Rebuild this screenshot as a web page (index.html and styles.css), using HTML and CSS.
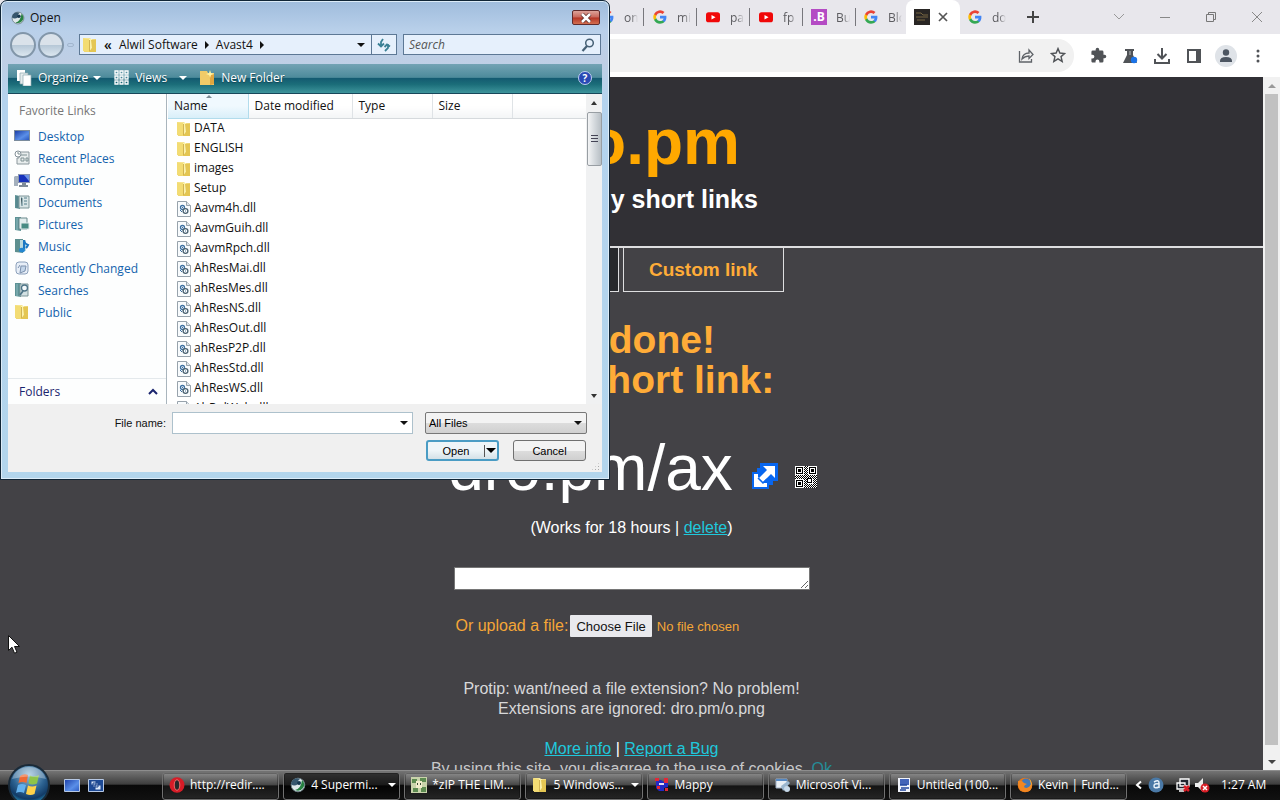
FILE: index.html
```html
<!DOCTYPE html>
<html lang="en">
<head>
<meta charset="utf-8">
<title>dro.pm</title>
<link rel="stylesheet" href="styles.css">
</head>
<body>
<svg class="sprite" aria-hidden="true">
  <defs>
    <linearGradient id="blueScreen" x1="0" y1="0" x2="1" y2="1"><stop offset="0" stop-color="#1c3fa8"/><stop offset=".6" stop-color="#5a8fe8"/><stop offset="1" stop-color="#2a58c0"/></linearGradient>
    <linearGradient id="folderYellow" x1="0" y1="0" x2="1" y2="1"><stop offset="0" stop-color="#fdf3b0"/><stop offset="1" stop-color="#dcb63c"/></linearGradient>
    <radialGradient id="orbFill" cx=".5" cy=".25" r=".8"><stop offset="0" stop-color="#9cc3da"/><stop offset=".5" stop-color="#2c6291"/><stop offset=".75" stop-color="#123b66"/><stop offset="1" stop-color="#36c3ea"/></radialGradient>
    <pattern id="dots" width="2" height="2" patternUnits="userSpaceOnUse"><rect width="2" height="2" fill="#fff"/><path d="M0 0h1v1H0zM1 1h1v1H1z" fill="#000"/></pattern>
  </defs>
  <symbol id="google" viewBox="0 0 24 24"><path fill="#4285f4" d="M23 12.3c0-.8-.1-1.600-.2-2.300H12v4.400h6.200c-.3 1.400-1.100 2.600-2.300 3.400v2.900h3.700c2.200-2 3.400-5 3.400-8.400z"/><path fill="#34a853" d="M12 23.500c3.100 0 5.700-1 7.600-2.800l-3.700-2.900c-1 .7-2.300 1.100-3.900 1.100-3 0-5.500-2-6.400-4.700H1.800v3C3.700 20.900 7.500 23.500 12 23.500z"/><path fill="#fbbc05" d="M5.600 14.200a7 7 0 0 1 0-4.400v-3H1.800a11.500 11.500 0 0 0 0 10.400z"/><path fill="#ea4335" d="M12 5.100c1.700 0 3.200.6 4.400 1.700l3.300-3.300A11.500 11.500 0 0 0 1.800 6.800l3.800 3C6.500 7.100 9 5.100 12 5.100z"/></symbol>
  <symbol id="youtube" viewBox="0 0 16 16"><rect y="2.500" width="16" height="11.500" rx="3" fill="#f00808"/><path d="M6.300 5.600v5.200l4.600-2.600z" fill="#fff"/></symbol>
  <symbol id="folder" viewBox="0 0 14 16"><path d="M1 1h6l1 1h5v13H1z" fill="url(#folderYellow)"/><path d="M0 1l6 1v13l-6-1z" fill="#f3dc74"/><path d="M6 2h3v9l-2 3H6z" fill="#fbf2ae"/><path d="M8 3h5v12H6l3-4z" fill="#e4c653"/><path d="M6.500 3v11" stroke="#c7a33c" stroke-width=".8"/></symbol>
  <symbol id="dll" viewBox="0 0 14 16"><path d="M.5.5h9l4 4v11H.5z" fill="#f8fbfd" stroke="#98a3ac"/><path d="M9.500.5v4h4" fill="#dde5ea" stroke="#98a3ac"/><g fill="#fff"><circle cx="5.500" cy="6.500" r="2" stroke="#3c6fa0" stroke-width="1.300"/><circle cx="8.500" cy="10" r="2.400" stroke="#48606f" stroke-width="1.300"/></g><path d="M5 6.500h1M8 10h1M3 9l2 2" stroke="#3c6fa0"/></symbol>
  <symbol id="avast" viewBox="0 0 16 16"><circle cx="8" cy="8" r="6.800" fill="#dfe8ea" stroke="#71848b"/><path d="M2 4Q5 0 10 2q-3 2-2 5-4 3-7 0z" fill="#36566d"/><path d="M12 3q4 4 1 8-3 4-8 2 6-1 7-10z" fill="#278142"/><circle cx="9" cy="6" r="2" fill="#15364e"/></symbol>
  <symbol id="desktop" viewBox="0 0 16 14"><path d="M0 1h16v11H0z" fill="#7a8b9c"/><path d="M1 2h14v9H1z" fill="url(#blueScreen)"/></symbol>
  <symbol id="recent" viewBox="0 0 16 16"><path d="M5 2h10v12H3V8h2z" fill="#e8eded" stroke="#8b979c"/><circle cx="4" cy="4" r="3" fill="#fff" stroke="#839097"/><path d="M4 2v2h2M7 5h6M7 8h3v3H7zM12 8h2v3h-2z" fill="none" stroke="#7e9092"/></symbol>
  <symbol id="computer" viewBox="0 0 16 16"><path d="M1 4h3v10H0V5z" fill="#a4b0bd"/><path d="M4 2h12v9H4z" fill="#8995b2"/><path d="M5 3h10v7H5z" fill="#1732bb"/><path d="M10 3h5v6z" fill="#6e94e4"/><path d="M8 11h4v2h2v2H5v-2h3z" fill="#7e8b98"/></symbol>
  <symbol id="library" viewBox="0 0 16 16"><path d="M1 1l5 1v13l-5-1z" fill="#5d9295"/><path d="M5 2h10v12H5z" fill="#d9e5e6" stroke="#7c9598"/><path d="M3 2v12M7 4h1v8M10 4h3M10 7h3M10 10h3" stroke="#547f8a"/></symbol>
  <symbol id="search-folder" viewBox="0 0 16 16"><path d="M1 1h6v14l-6-1z" fill="#5d9295"/><path d="M6 2h8v12H6z" fill="#d3e1e3" stroke="#7c9598"/><circle cx="10.500" cy="6" r="3" fill="#f3f9fb" stroke="#4f7588" stroke-width="1.300"/><path d="M9 9l-3 4" stroke="#4f7588" stroke-width="1.800"/><path d="M3 2v12" stroke="#8fbac0"/></symbol>
  <symbol id="pictures" viewBox="0 0 16 16"><path d="M1 1h6v14l-6-1z" fill="#5d9295"/><path d="M5 2h8v11H5z" fill="#e3eeee" stroke="#68888c"/><path d="M7 7h8v6H7z" fill="#488b83" stroke="#e0eaea"/><path d="M3 2v12" stroke="#8fbac0"/></symbol>
  <symbol id="music" viewBox="0 0 16 16"><path d="M1 1h8v14l-8-1z" fill="#5d8f8f"/><path d="M6 2h6v11H6z" fill="#b9d9de"/><path d="M10 2v9M10 3q1 3 4 4-1 2-2 3" stroke="#1b78c4" stroke-width="2" fill="none"/><ellipse cx="8" cy="12" rx="3" ry="2.300" fill="#2487d0"/></symbol>
  <symbol id="changed" viewBox="0 0 16 16"><rect x="2" y="2" width="12" height="12" rx="3" fill="#e7eef7" stroke="#8ca0bb"/><path d="M6 13l1-7h5l-1 5-5 2zM4 8l2-3" fill="#c3d5e9" stroke="#7c91ad"/></symbol>
  <symbol id="opera" viewBox="0 0 16 16"><ellipse cx="8" cy="8" rx="7.500" ry="7.700" fill="#d71c27"/><ellipse cx="8" cy="8" rx="2.800" ry="5.300" fill="#29282a" stroke="#ef6868"/></symbol>
  <symbol id="firefox" viewBox="0 0 16 16"><circle cx="8" cy="8" r="7.300" fill="#e87717"/><circle cx="9" cy="6.500" r="4.900" fill="#4279b8"/><path d="M1 4q4-1 6 2l3 1q-3 1-3 3 4 3 8-4 1 9-7 9-8-1-7-11z" fill="#f18722"/><path d="M12 1q5 6 0 11 4-4 0-11z" fill="#ffd151"/></symbol>
</svg>

<div class="screen">
  <section class="browser" aria-label="Browser">
    <div class="tabstrip">
      <div class="tab"><svg class="favicon"><use href="#google"/></svg><span class="tab-text">on</span></div>
      <div class="tab"><svg class="favicon"><use href="#google"/></svg><span class="tab-text">mi</span></div>
      <div class="tab"><svg class="favicon"><use href="#youtube"/></svg><span class="tab-text">pa</span></div>
      <div class="tab"><svg class="favicon"><use href="#youtube"/></svg><span class="tab-text">fp</span></div>
      <div class="tab"><span class="favicon b-icon">.B</span><span class="tab-text">Bu</span></div>
      <div class="tab last"><svg class="favicon"><use href="#google"/></svg><span class="tab-text">Blo</span></div>
      <div class="tab active"><svg class="favicon" viewBox="0 0 16 16"><path d="M0 0h16v16H0z" fill="#292624"/><path d="M2 4h5l2 2h5M2 8h12M3 11h8" stroke="#766440" fill="none"/></svg><button class="plain" aria-label="Close tab"><svg width="10" height="10" viewBox="0 0 10 10"><path d="M1 1l8 8M9 1L1 9" stroke="#555" stroke-width="1.700"/></svg></button></div>
      <div class="tab last"><svg class="favicon"><use href="#google"/></svg><span class="tab-text">do</span></div>
      <button class="plain new-tab" aria-label="New tab"><svg width="12" height="12" viewBox="0 0 12 12"><path d="M6 0v12M0 6h12" stroke="#444" stroke-width="2"/></svg></button>
      <div class="window-buttons">
        <button class="plain" aria-label="Search tabs"><svg width="12" height="12" viewBox="0 0 12 12"><path d="M1 3l5 5 5-5" fill="none" stroke="#999"/></svg></button>
        <button class="plain" aria-label="Minimize"><svg width="12" height="12" viewBox="0 0 12 12"><path d="M1 6.500h10" stroke="#888"/></svg></button>
        <button class="plain" aria-label="Restore"><svg width="12" height="12" viewBox="0 0 12 12"><path d="M1.500 3.500h7v7h-7zM3.500 3V1.500h7v7H9" fill="none" stroke="#777"/></svg></button>
        <button class="plain" aria-label="Close"><svg width="12" height="12" viewBox="0 0 12 12"><path d="M1 1l10 10M11 1L1 11" stroke="#888"/></svg></button>
      </div>
    </div>
    <div class="toolbar">
      <div class="omnibox">
        <button class="plain" aria-label="Share"><svg width="18" height="18" viewBox="0 0 18 18" fill="none" stroke="#5f6368" stroke-width="1.300"><path d="M2.500 5v11h12v-3M5 13q1-6 7-6V4l4 4.500-4 4V10q-4 0-7 3z"/></svg></button>
        <button class="plain" aria-label="Bookmark"><svg width="16" height="16" viewBox="0 0 18 18"><path d="M9 1.800l2.100 5 5.400.5-4.100 3.500 1.300 5.400L9 13.300l-4.700 2.900 1.300-5.400L1.500 7.300l5.400-.5z" fill="none" stroke="#505357" stroke-width="1.600"/></svg></button>
      </div>
      <div class="actions">
        <button class="plain" aria-label="Extensions"><svg width="17" height="17" viewBox="0 0 24 24"><path fill="#505357" d="M20.500 11H19V7a2 2 0 0 0-2-2h-4V3.500a2.500 2.500 0 0 0-5 0V5H4a2 2 0 0 0-2 2v3.800h1.500a2.700 2.700 0 0 1 0 5.400H2V20c0 1.100.9 2 2 2h3.800v-1.500a2.700 2.700 0 0 1 5.400 0V22H17a2 2 0 0 0 2-2v-4h1.500a2.500 2.500 0 0 0 0-5z"/></svg></button>
        <button class="plain" aria-label="Labs"><svg width="16" height="16" viewBox="0 0 16 16"><path d="M3 1h9v2h-1v4l4 8H1l4-8V3H3z" fill="#505357"/><path d="M7 3h2v4H7z" fill="#85888b"/><circle cx="12" cy="12" r="3.200" fill="#1a73e8"/></svg></button>
        <button class="plain" aria-label="Downloads"><svg width="18" height="18" viewBox="0 0 18 18" fill="none" stroke="#505357" stroke-width="2"><path d="M9 1v10M4.500 7L9 11.500 13.500 7M2 12v4h14v-4"/></svg></button>
        <button class="plain" aria-label="Side panel"><svg width="16" height="16" viewBox="0 0 16 16"><path d="M2 2h12v12H2z" fill="none" stroke="#505357" stroke-width="2"/><path d="M10 2h5v12h-5z" fill="#505357"/></svg></button>
        <button class="plain" aria-label="Profile"><svg width="22" height="22" viewBox="0 0 22 22"><circle cx="11" cy="11" r="11" fill="#dfe3e8"/><circle cx="11" cy="7.500" r="3.200" fill="#4d5662"/><path d="M5 16q0-4 6-4t6 4v1H5z" fill="#4d5662"/></svg></button>
        <button class="plain" aria-label="Menu"><svg width="4" height="14" viewBox="0 0 4 14" fill="#505357"><circle cx="2" cy="2" r="1.500"/><circle cx="2" cy="7" r="1.500"/><circle cx="2" cy="12" r="1.500"/></svg></button>
      </div>
    </div>
    <div class="viewport">
      <main class="page">
        <header class="site-header">
          <h1>dro.pm</h1>
          <p>Extremely short links</p>
        </header>
        <nav class="modes"><a class="mode current" href="#short">Short link</a><a class="mode" href="#custom">Custom link</a></nav>
        <h2>All done!<br>Your short link:</h2>
        <div class="short-link">
          <span>dro.pm/ax</span>
          <svg class="open-icon" viewBox="0 0 26 26"><path d="M8 0h18v18h-5v4h-4v4H0V9h5V5h3z" fill="#0866ef"/><path d="M11 3h12v12l-4-4-8 8-4-4 8-8z" fill="#fff"/><path d="M2 11h4v3l6 6h3v4H2z" fill="#fff"/><path d="M6 15l5 5 4-4" fill="none" stroke="#0866ef" stroke-width="1.500"/></svg>
          <svg class="qr" viewBox="0 0 22 22" shape-rendering="crispEdges"><path d="M0 0h22v22H0z" fill="url(#dots)"/><g fill="#fff"><path d="M0 0h9v9H0zM13 0h9v9h-9zM0 13h9v9H0zM12 12h6v6h-6z"/></g><g fill="none" stroke="#000"><path d="M1.500 1.500h6v6h-6zM14.500 1.500h6v6h-6zM1.500 14.500h6v6h-6zM12.500 12.500h4v4h-4z"/></g><path d="M3 3h3v3H3zM16 3h3v3h-3zM3 16h3v3H3z"/></svg>
        </div>
        <p class="validity">(Works for 18 hours | <a href="#delete">delete</a>)</p>
        <form class="paste">
          <textarea aria-label="Link or text"></textarea>
          <div class="upload"><label for="upload">Or upload a file:</label><input type="file" id="upload"></div>
        </form>
        <p class="protip">Protip: want/need a file extension? No problem!<br>Extensions are ignored: dro.pm/o.png</p>
        <p class="legal"><a href="#info">More info</a> | <a href="#bug">Report a Bug</a><br><span>By using this site, you disagree to the use of cookies. <a class="ok" href="#ok">Ok</a></span></p>
      </main>
      <div class="scrollbar"><span class="arrow up"></span><span class="thumb"></span><span class="arrow down"></span></div>
    </div>
  </section>

  <section class="dialog" role="dialog" aria-labelledby="dialog-title">
    <div class="titlebar"><svg width="14" height="14"><use href="#avast"/></svg><span id="dialog-title">Open</span><button class="close" aria-label="Close"><svg width="12" height="10" viewBox="0 0 12 10"><path d="M2 1l8 8M10 1L2 9" stroke="#5a2a25" stroke-width="4"/><path d="M2 1l8 8M10 1L2 9" stroke="#fff" stroke-width="2.500"/></svg></button></div>
    <div class="navrow">
      <button class="round" aria-label="Back"></button><button class="round" aria-label="Forward"></button><span class="history"></span>
      <div class="address"><svg width="14" height="16"><use href="#folder"/></svg><span class="chevrons">«</span><span>Alwil Software</span><i class="right"></i><span>Avast4</span><i class="right"></i><i class="down"></i></div>
      <button class="refresh" aria-label="Refresh"><svg width="14" height="14" viewBox="0 0 14 14" fill="none" stroke="#3a8095" stroke-width="1.800"><path d="M6 1L4 4v4M1 5.500l3 3 3-3M8 13l3-3V6M7.500 9L10 6.500l3 2"/></svg></button>
      <div class="search"><input type="text" placeholder="Search" aria-label="Search"><svg width="14" height="14" viewBox="0 0 14 14" fill="none" stroke="#466075"><circle cx="8.500" cy="5" r="3.800" stroke-width="1.500"/><path d="M6 8l-4.500 5" stroke-width="2.200"/></svg></div>
    </div>
    <div class="commands">
      <button class="command organize"><svg width="16" height="16" viewBox="0 0 16 16"><path d="M1 0h8v11H1z" fill="#fff"/><path d="M4 3h8v11H4z" fill="#e5eced" stroke="#8ca9af" stroke-width=".7"/><path d="M7 5h8v11H7z" fill="#fff" stroke="#8ca9af" stroke-width=".7"/></svg>Organize<i class="down"></i></button>
      <button class="command views"><svg width="15" height="15" viewBox="0 0 15 15" fill="none" stroke="#fff" stroke-width="1.300"><path d="M1 1h3v3H1zM6 1h3v3H6zM11 1h3v3h-3zM1 6h3v3H1zM6 6h3v3H6zM11 6h3v3h-3zM1 11h3v3H1zM6 11h3v3H6zM11 11h3v3h-3z"/></svg>Views<i class="down"></i></button>
      <button class="command"><svg width="16" height="16" viewBox="0 0 16 16"><path d="M1 1h7l1 2h6v12H1z" fill="#f1cb68"/><path d="M10 4h5v10l-4 1V9z" fill="#e0a63f"/><path d="M11 0l1 3 3 1-3 1-1 3-1-3-3-1 3-1z" fill="#fff4a4"/></svg>New Folder</button>
      <button class="help" aria-label="Help">?</button>
    </div>
    <div class="files">
      <nav class="places">
        <h3>Favorite Links</h3>
        <a href="#desktop"><svg><use href="#desktop"/></svg>Desktop</a>
        <a href="#recent"><svg><use href="#recent"/></svg>Recent Places</a>
        <a href="#computer"><svg><use href="#computer"/></svg>Computer</a>
        <a href="#documents"><svg><use href="#library"/></svg>Documents</a>
        <a href="#pictures"><svg><use href="#pictures"/></svg>Pictures</a>
        <a href="#music"><svg><use href="#music"/></svg>Music</a>
        <a href="#changed"><svg><use href="#changed"/></svg>Recently Changed</a>
        <a href="#searches"><svg><use href="#search-folder"/></svg>Searches</a>
        <a href="#public"><svg><use href="#folder"/></svg>Public</a>
        <button class="folders">Folders<svg width="10" height="7" viewBox="0 0 10 7"><path d="M1 6l4-4 4 4" fill="none" stroke="#1a246e" stroke-width="2"/></svg></button>
      </nav>
      <div class="list">
        <table>
          <colgroup><col class="c-name"><col class="c-date"><col class="c-type"><col class="c-size"><col></colgroup>
          <thead><tr><th class="sorted">Name</th><th>Date modified</th><th>Type</th><th>Size</th><th></th></tr></thead>
          <tbody>
            <tr><td colspan="5"><svg><use href="#folder"/></svg>DATA</td></tr>
            <tr><td colspan="5"><svg><use href="#folder"/></svg>ENGLISH</td></tr>
            <tr><td colspan="5"><svg><use href="#folder"/></svg>images</td></tr>
            <tr><td colspan="5"><svg><use href="#folder"/></svg>Setup</td></tr>
            <tr><td colspan="5"><svg><use href="#dll"/></svg>Aavm4h.dll</td></tr>
            <tr><td colspan="5"><svg><use href="#dll"/></svg>AavmGuih.dll</td></tr>
            <tr><td colspan="5"><svg><use href="#dll"/></svg>AavmRpch.dll</td></tr>
            <tr><td colspan="5"><svg><use href="#dll"/></svg>AhResMai.dll</td></tr>
            <tr><td colspan="5"><svg><use href="#dll"/></svg>ahResMes.dll</td></tr>
            <tr><td colspan="5"><svg><use href="#dll"/></svg>AhResNS.dll</td></tr>
            <tr><td colspan="5"><svg><use href="#dll"/></svg>AhResOut.dll</td></tr>
            <tr><td colspan="5"><svg><use href="#dll"/></svg>ahResP2P.dll</td></tr>
            <tr><td colspan="5"><svg><use href="#dll"/></svg>AhResStd.dll</td></tr>
            <tr><td colspan="5"><svg><use href="#dll"/></svg>AhResWS.dll</td></tr>
            <tr><td colspan="5"><svg><use href="#dll"/></svg>AhRulWeb.dll</td></tr>
          </tbody>
        </table>
      </div>
      <div class="list-scroll"><i class="up"></i><span class="grip"></span><i class="down"></i></div>
    </div>
    <div class="chooser">
      <label for="filename">File name:</label>
      <div class="combo"><input id="filename" type="text"><i class="down"></i></div>
      <div class="combo filter"><select aria-label="File type"><option>All Files</option></select><i class="down"></i></div>
      <div class="buttons"><button class="push default"><span>Open</span><i class="down"></i></button><button class="push">Cancel</button></div>
      <span class="resize"></span>
    </div>
  </section>

  <svg class="cursor" viewBox="0 0 12 19"><path d="M.5.5v15l3.500-3.300 2.500 6 2.500-1-2.500-5.700h5z" fill="#fff" stroke="#111"/></svg>

  <footer class="taskbar">
    <button class="start" aria-label="Start"><svg width="42" height="42" viewBox="0 0 42 42"><circle cx="21" cy="21" r="20" fill="url(#orbFill)" stroke="#1a2a38" stroke-width="2"/><path d="M12 12q4-3 8-1l-1.500 8q-4-2-8 0z" fill="#ee6a35"/><path d="M22 11.500q4 2 9-.5l-2 8.500q-4 2-8.500 0z" fill="#8ec449"/><path d="M10 21q4-2 8 0l-2 8q-4-2-8 0z" fill="#63b1ed"/><path d="M20 21.500q4 2 8.500 0l-2 8.500q-4 2-8.500 0z" fill="#ffd24a"/><path d="M4 15Q8 3 21 3t17 12q-17-5-34 0z" fill="#fff" opacity=".3"/></svg></button>
    <div class="quick">
      <button class="plain" aria-label="Show desktop"><svg width="16" height="13" viewBox="0 0 16 13"><path d="M.5.5h15v12H.5z" fill="url(#blueScreen)" stroke="#b6c8e4"/></svg></button>
      <button class="plain" aria-label="Switch windows"><svg width="16" height="13" viewBox="0 0 16 13"><path d="M.5.5h15v12H.5z" fill="#1d4a96" stroke="#b6c8e4"/><path d="M3 2h5v4H3zM5 4h5v4H5zM7 6h6v5H7z" fill="#dbe9fb" stroke="#1e478e"/></svg></button>
    </div>
    <div class="tasks">
      <button class="task"><svg><use href="#opera"/></svg><span>http://redir....</span></button>
      <button class="task pressed"><svg><use href="#avast"/></svg><span>4 Supermi...</span><i class="down"></i></button>
      <button class="task"><svg viewBox="0 0 16 16"><path d="M0 0h16v16H0z" fill="#c9d3ab"/><path d="M1 2h5v4H1zM9 1h6v4H9zM2 11h5v4H2zM10 10h5v5h-5z" fill="#5d8b51"/><path d="M5 4h6v7H5z" fill="#f0eccc"/><path d="M6 6h1v2H6zM9 6h1v2H9z" fill="#3b4a35"/></svg><span>*zIP THE LIM...</span></button>
      <button class="task"><svg><use href="#folder"/></svg><span>5 Windows...</span><i class="down"></i></button>
      <button class="task"><svg viewBox="0 0 16 16"><path d="M2 3h5l3 2 4-3v8l-4 1v3H5l-3-3z" fill="#2329c4"/><path d="M1 1h4v3H1zM10 1h4v5h-4zM3 9h3v3H3zM11 11h3v3h-3z" fill="#e22737"/><path d="M5 6h5v2H5z" fill="#e9dcf0"/></svg><span>Mappy</span></button>
      <button class="task"><svg viewBox="0 0 16 16"><path d="M1 2h11v9H1z" fill="#e8eef4" stroke="#a0b0c4"/><path d="M1 2h11v2H1z" fill="#5689c3"/><path d="M6 9l7-5 2 2-7 8z" fill="#9ab6cf"/><circle cx="12" cy="12" r="3" fill="#c7d9ea"/></svg><span>Microsoft Vi...</span></button>
      <button class="task"><svg viewBox="0 0 16 16"><path d="M2 1h12v14H2z" fill="#f1f4fb"/><path d="M4 2h9v6H4z" fill="#4364b8"/><path d="M4 8h7M5 11h8M4 13h6" stroke="#23479f" stroke-width="1.500"/></svg><span>Untitled (100...</span></button>
      <button class="task"><svg><use href="#firefox"/></svg><span>Kevin | Fund...</span></button>
    </div>
    <div class="tray">
      <svg width="8" height="10" viewBox="0 0 8 10"><path d="M6 1.500L2 5l4 3.500" fill="none" stroke="#fff" stroke-width="2"/></svg>
      <svg class="avast-tray" width="16" height="16" viewBox="0 0 16 16"><circle cx="8" cy="8" r="7.500" fill="#4a79a6"/><path d="M6 5q5-3 5 1v5M11 7q-5-1-5 2t5 1" fill="none" stroke="#e8f2fa" stroke-width="1.500"/></svg>
      <svg width="16" height="16" viewBox="0 0 16 16"><path d="M5 2h9v7H5zM2 6h8v6H2zM4 14h5" fill="#20262e" stroke="#fff" stroke-width="1.300"/><path d="M9 9l5 5M14 9l-5 5" stroke="#d91d25" stroke-width="2.500"/></svg>
      <svg width="16" height="16" viewBox="0 0 16 16"><path d="M1 6h3l5-5v14l-5-5H1z" fill="#eee"/><circle cx="11" cy="11" r="4.500" fill="#d81e26"/><path d="M9 9l4 4M13 9l-4 4" stroke="#fff" stroke-width="1.500"/></svg>
      <time>1:27 AM</time>
    </div>
  </footer>
</div>
</body>
</html>
```
FILE: styles.css
```css
* { box-sizing: border-box; }
body { margin: 0; font-family: "Open Sans", "Noto Sans", sans-serif; font-size: 12px; }
button, input, select { font: inherit; }
h1, h2, h3, p { margin: 0; }
button { padding: 0; cursor: default; }
.sprite { position: absolute; width: 0; height: 0; }
.plain { display: flex; align-items: center; justify-content: center; border: 0; background: none; }

.up, .down, .right { flex: none; width: 0; height: 0; border: 4px solid transparent; }
.down { border-top-color: currentColor; border-bottom: 0; }
.up { border-bottom-color: currentColor; border-top: 0; }
.right { border-left-color: currentColor; border-right: 0; }

.screen { position: relative; display: flex; flex-direction: column; height: 100vh; overflow: hidden; background: #434246; }

/* Browser window */
.browser { flex: 1; min-height: 0; display: flex; flex-direction: column; }
.tabstrip { flex: none; display: flex; align-items: center; height: 34px; padding-left: 591px; background: #e8e7ec; }
.tab { display: flex; align-items: center; gap: 9px; width: 53px; height: 18px; padding-left: 8px; border-right: 1px solid #77777c; color: #5c5c60; }
.tab.last { width: 50px; padding-left: 7px; border-color: transparent; }
.tab.active { align-self: flex-end; height: 34px; width: 54px; padding-left: 8px; gap: 8px; border: 0; border-radius: 8px 8px 0 0; background: #fff; }
.favicon { flex: none; width: 16px; height: 16px; }
svg.favicon { padding: 1px; }
.active svg.favicon { padding: 0; }
.b-icon { background: #b44bc4; color: #fff; font-weight: 700; line-height: 16px; text-align: center; }
.tab-text { width: 14px; overflow: hidden; white-space: nowrap; -webkit-mask-image: linear-gradient(90deg, #000 50%, transparent); mask-image: linear-gradient(90deg, #000 50%, transparent); }
.new-tab { width: 28px; height: 28px; margin-left: 9px; }
.window-buttons { display: flex; margin-left: auto; height: 28px; }
.window-buttons button { width: 46px; }
.toolbar { flex: none; display: flex; align-items: center; gap: 8px; height: 43px; padding-right: 6px; background: #fff; }
.omnibox { flex: 1; display: flex; justify-content: flex-end; height: 33px; border-radius: 16px; background: #f1f1f1; }
.omnibox button, .actions button { width: 32px; height: 32px; }
.actions { display: flex; }
.viewport { flex: 1; min-height: 0; display: flex; }

/* Web page */
.page { flex: 1; min-width: 0; overflow: hidden; background: #434246; color: #fff; font-family: "Liberation Sans", Arial, sans-serif; font-size: 16px; line-height: 20px; text-align: center; }
.page a { color: #1fc8dc; }
.site-header { padding: 29px 0 33px; border-bottom: 2px solid #dedee0; background: #313035; }
.site-header h1 { color: #ffa800; font-size: 64px; line-height: 72px; }
.site-header p { margin-top: 7px; font-size: 25px; line-height: 28px; font-weight: 700; }
.modes { display: flex; justify-content: center; gap: 4px; }
.page .mode { padding: 0 25px; border: 1px solid #dedee0; border-top: 0; color: #ffac38; font-size: 19px; line-height: 43px; font-weight: 700; text-decoration: none; }
.page .mode.current { background: #27282c; }
.page h2 { margin-top: 28px; color: #ffac38; font-size: 39px; line-height: 40px; }
.short-link { display: flex; justify-content: center; align-items: flex-end; margin-top: 32px; padding-left: 2px; font-size: 64px; line-height: 72px; }
.open-icon { width: 26px; height: 26px; margin: 0 17px 15px 19px; }
.qr { width: 22px; height: 22px; margin-bottom: 16px; }
.validity { margin-top: 14px; }
.paste { width: 356px; margin: 29px auto 0; text-align: left; }
.paste textarea { display: block; width: 100%; height: 23px; border: 1px solid #767676; background: #fff; }
.upload { display: flex; align-items: center; gap: 2px; margin-top: 25px; padding-left: 2px; color: #f5a637; }
.upload label { flex: none; white-space: nowrap; }
.upload input { flex: 1; min-width: 0; font-size: 13px; line-height: 20px; }
.upload input::file-selector-button { height: 22px; margin-right: 5px; padding: 0 6px; border: 0; border-radius: 1px; background: #e9e9ed; color: #111; font-size: 13px; }
.protip { margin-top: 42px; color: #d8d8da; }
.legal { margin-top: 20px; }
.legal span { color: #c8c8ca; }
.page .ok { color: #258c98; text-decoration: none; }
.scrollbar { flex: none; display: flex; flex-direction: column; align-items: center; width: 17px; background: #f1f1f1; }
.arrow { display: grid; place-items: center; width: 17px; height: 17px; border: 0; }
.arrow::after { content: ""; border: 4px solid transparent; }
.arrow.up::after { border-bottom-color: #999; border-top: 0; }
.arrow.down::after { border-top-color: #444; border-bottom: 0; }
.thumb { flex: 1; width: 13px; margin-bottom: 8px; background: #c1c1c1; }

/* File dialog */
.dialog { position: absolute; top: 0; left: 0; display: flex; flex-direction: column; width: 610px; height: 480px; padding: 0 7px 7px; border: 1px solid #102536; border-radius: 7px 7px 0 0; background: linear-gradient(#9fbcdc, #b9d0ea 30px, #bfcfe5 60px, #b4d3ee 100px, #b2d5ec); box-shadow: inset 0 0 0 1px #dcecf8; color: #111; }
.titlebar { flex: none; display: flex; align-items: center; gap: 5px; height: 33px; padding: 0 2px 0 3px; }
.close { display: grid; place-items: center; width: 28px; height: 15px; margin-left: auto; border: 1px solid #602b2c; border-radius: 2px; background: linear-gradient(#dca39a, #c9675b 48%, #b33425 52%, #d36f50); }
.navrow { flex: none; display: flex; align-items: center; height: 21px; padding: 0 1px 0 2px; }
.round { flex: none; width: 26px; height: 26px; margin-right: 2px; border: 2px solid #8296a9; border-radius: 50%; background: linear-gradient(#dae2ea 50%, #b7c8d7 52%, #dce7f0); }
.history { width: 7px; height: 4px; margin: 0 5px 0 1px; border: 1px solid #a2b6ce; border-radius: 2px; }
.address, .refresh, .search { height: 21px; border: 1px solid #5d7895; background: #e6f0fc; }
.address { display: flex; align-items: center; flex: 1; gap: 7px; padding: 0 6px 0 3px; }
.chevrons { width: 8px; font-size: 14px; line-height: 16px; font-weight: 600; }
.address .down { margin-left: auto; }
.refresh { display: grid; place-items: center; width: 26px; margin-left: -1px; }
.search { display: flex; align-items: center; width: 198px; margin-left: 6px; padding-right: 5px; }
.search input { flex: 1; min-width: 0; padding: 0 5px; border: 0; background: none; outline: 0; font-style: italic; }
.search input::placeholder { color: #555; }
.commands { flex: none; display: flex; align-items: center; height: 30px; margin-top: 9px; padding: 0 10px 2px 8px; border-bottom: 1px solid #17475a; background: linear-gradient(#73a3b4, #4d8b9b 46%, #145b71 50%, #1b6d79 70%, #3d949b); color: #fff; }
.command { display: flex; align-items: center; gap: 6px; border: 0; background: none; color: #fff; text-shadow: 0 1px 1px #134554; }
.organize { margin-right: 13px; }
.organize .down { margin-left: -1px; }
.views { margin-right: 12px; }
.views .down { margin-left: 6px; }
.help { width: 14px; height: 14px; margin-left: auto; border: 1px solid #bfcdf0; border-radius: 50%; background: #2949b5; color: #fff; font-size: 10px; line-height: 12px; font-weight: 700; }
.files { flex: 1; min-height: 0; display: flex; background: #fff; }
.places { display: flex; flex-direction: column; width: 159px; border-right: 1px solid #a9b5bd; background: #fdfefe; }
.places h3 { padding: 6px 0 3px 11px; color: #777; font-size: 12px; line-height: 22px; font-weight: 400; }
.places a { display: flex; align-items: center; gap: 8px; height: 22px; padding-left: 6px; color: #1463ad; text-decoration: none; }
.places a svg { width: 16px; height: 16px; }
.folders { display: flex; align-items: center; justify-content: space-between; height: 26px; margin-top: auto; padding: 0 8px 0 11px; border: 0; border-top: 1px solid #e4e9ec; background: none; color: #1a246e; }
.list { flex: 1; min-width: 0; overflow: hidden; padding-left: 1px; }
table { width: 100%; table-layout: fixed; border-collapse: collapse; }
.c-name, .c-type, .c-size { width: 80px; }
.c-date { width: 104px; }
th { height: 24px; padding: 0 6px; border-right: 1px solid #dfe3e6; border-bottom: 1px solid #d6dadd; background: linear-gradient(#fff 50%, #f3f5f6); font-weight: 400; text-align: left; }
th:last-child { border-right: 0; }
th.sorted { background: linear-gradient(#f0f9fe 50%, #d9eff9); border-color: #b2dcec; }
.sorted::before { content: ""; position: absolute; margin: -2px 0 0 32px; border: 3px solid transparent; border-top: 0; border-bottom-color: #7a8b94; }
td { height: 20px; padding: 0 9px; line-height: 18px; }
td svg { width: 14px; height: 16px; margin-right: 3px; vertical-align: middle; }
.list-scroll { display: flex; flex-direction: column; align-items: center; width: 16px; padding: 7px 0 6px; background: #f0f1f2; color: #333; }
.list-scroll .down { margin-top: auto; }
.list-scroll .up, .list-scroll .down { border-left-width: 3px; border-right-width: 3px; }
.grip { display: grid; place-items: center; width: 15px; height: 54px; margin-top: 7px; border: 1px solid #989ea3; border-radius: 2px; background: linear-gradient(90deg, #f3f4f5, #d4d9dd 50%, #b8bfc5); }
.grip::before { content: ""; width: 7px; height: 8px; background: repeating-linear-gradient(#445 0 1px, transparent 1px 3px); }
.chooser { flex: none; position: relative; display: grid; grid-template-columns: 158px 241px 162px; column-gap: 6px; row-gap: 6px; align-items: center; height: 68px; padding-top: 8px; align-content: start; background: #f0f0f0; font-family: "Liberation Sans", Arial, sans-serif; font-size: 11px; }
.chooser label { text-align: right; }
.combo { display: flex; align-items: center; height: 22px; padding-right: 4px; border: 1px solid #adc1cc; background: #fff; }
.combo input { flex: 1; min-width: 0; border: 0; background: none; outline: 0; }
.filter { margin-left: 6px; width: 162px; border-color: #777; border-radius: 2px; background: linear-gradient(#f3f3f3 50%, #dcdcdc 52%, #d0d0d0); }
.filter select { flex: 1; padding-left: 3px; border: 0; background: none; appearance: none; outline: 0; }
.buttons { grid-column: 3; display: flex; gap: 14px; margin-left: 7px; width: 160px; }
.push { display: flex; align-items: center; justify-content: center; width: 73px; height: 21px; border: 1px solid #707070; border-radius: 3px; background: linear-gradient(#f3f3f3 50%, #dddddd 52%, #cfcfcf); }
.push.default { border: 2px solid #4a9cc4; background: linear-gradient(#eef5f8 50%, #d4e1e7); }
.push.default span { flex: 1; border-right: 1px solid #555; }
.default .down { margin: 0 1px; border-width: 5px 5px 0; }
.resize { position: absolute; right: 2px; bottom: 1px; width: 9px; height: 9px; background: radial-gradient(circle, #aaa 1px, transparent 1px) 0 0 / 3px 3px; clip-path: polygon(100% 0, 100% 100%, 0 100%); }

.cursor { position: absolute; top: 635px; left: 8px; width: 12px; height: 19px; }

/* Taskbar */
.taskbar { position: relative; flex: none; display: flex; align-items: center; height: 30px; border-top: 1px solid #8d8d8d; background: linear-gradient(#747474, #3e3e3e 45%, #090909 50%, #111); color: #fff; }
.start { flex: none; width: 42px; height: 42px; margin: -2px 14px 0 8px; border: 0; background: none; }
.quick { display: flex; gap: 8px; width: 98px; }
.tasks { flex: 1; display: flex; gap: 4px; min-width: 0; }
.task { flex: 1; display: flex; align-items: center; gap: 5px; min-width: 0; height: 28px; padding: 0 3px 2px 6px; border: 1px solid #717171; border-radius: 3px; background: linear-gradient(#8b8b8b, #484848 45%, #141414 50%, #252525); box-shadow: inset 0 0 0 1px #00000044; color: #fff; }
.task.pressed { background: linear-gradient(#313131, #1a1a1a 45%, #030303 50%, #111); }
.task svg { flex: none; width: 16px; height: 16px; }
.task span { overflow: hidden; white-space: nowrap; }
.task .down { margin-left: auto; }
.tray { flex: none; display: flex; align-items: center; gap: 3px; width: 153px; padding: 0 0 2px 8px; }
.avast-tray { margin: 0 8px 0 2px; }
.tray time { margin-left: 8px; white-space: nowrap; }
```
